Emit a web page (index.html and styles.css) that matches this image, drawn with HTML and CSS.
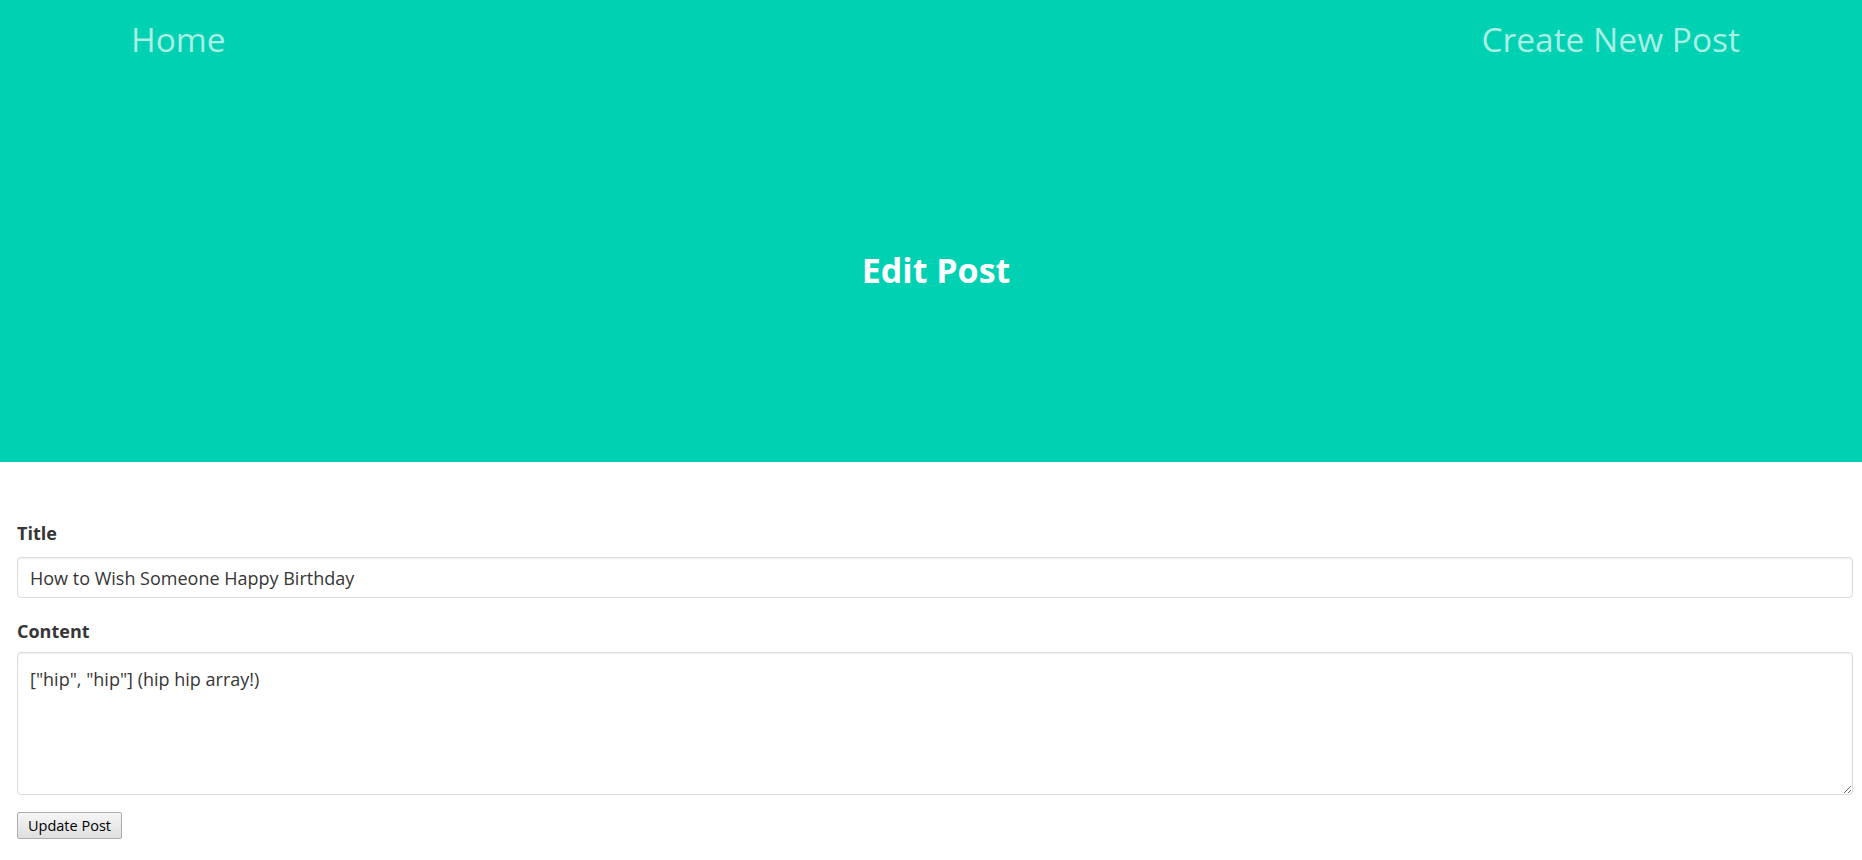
FILE: index.html
```html
<!DOCTYPE html>
<html>
<head>
<meta charset="utf-8">
<link rel="stylesheet" href="styles.css">
</head>
<body>
<header class="hero">
  <nav class="nav">
    <a class="nav-link" href="#">Home</a>
    <a class="nav-link" href="#">Create New Post</a>
  </nav>
  <div class="hero-body">
    <h1 class="hero-title">Edit Post</h1>
  </div>
</header>
<main class="form-wrap">
  <form class="post-form">
    <label class="field-label" for="title">Title</label>
    <input class="field-input" id="title" type="text" value="How to Wish Someone Happy Birthday">
    <label class="field-label label-content" for="content">Content</label>
    <textarea class="field-textarea" id="content">["hip", "hip"] (hip hip array!)</textarea>
    <div class="actions"><button class="btn" type="button">Update Post</button></div>
  </form>
</main>
</body>
</html>
```
FILE: styles.css
```css
* { box-sizing: border-box; }
html, body { margin: 0; padding: 0; }
body {
  font-family: "Open Sans", "Noto Sans", sans-serif;
  color: #363636;
  background: #fff;
}
.hero {
  background: #00d1b2;
  height: 462px;
  display: flex;
  flex-direction: column;
}
.nav {
  display: flex;
  justify-content: space-between;
  padding: 14px 122px 0 131px;
}
.nav-link {
  color: #a9efe5;
  text-decoration: none;
  font-size: 33.5px;
  line-height: 50px;
}
.hero-body {
  display: flex;
  justify-content: center;
  padding-top: 184px;
  padding-left: 10px;
}
.hero-title {
  margin: 0;
  color: #fff;
  font-size: 34px;
  font-weight: 700;
  line-height: 44px;
}
.form-wrap {
  padding: 59px 9px 0 17px;
}
.post-form {
  display: flex;
  flex-direction: column;
}
.field-label {
  font-weight: 700;
  font-size: 18px;
  line-height: 24px;
  color: #363636;
  margin-bottom: 12px;
}
.label-content { margin-top: 21px; margin-bottom: 9px; }
.field-input, .field-textarea {
  width: 100%;
  font-family: inherit;
  font-size: 18px;
  color: #363636;
  border: 1px solid #dbdbdb;
  border-radius: 4px;
  box-shadow: inset 0 1px 2px rgba(10,10,10,0.06);
  padding: 0 12px;
  background: #fff;
}
.field-input { height: 41px; }
.field-textarea {
  height: 143px;
  padding-top: 14px;
  line-height: 24px;
  resize: vertical;
}
.actions { margin-top: 17px; }
.btn {
  font-family: "Open Sans", sans-serif;
  font-size: 14.5px;
  white-space: nowrap;
  height: 27px;
  width: 105px;
  padding: 0;
  color: #000;
  background: linear-gradient(#f6f6f6, #dedede);
  border: 1px solid #adadad;
  border-radius: 2px;
}
```
